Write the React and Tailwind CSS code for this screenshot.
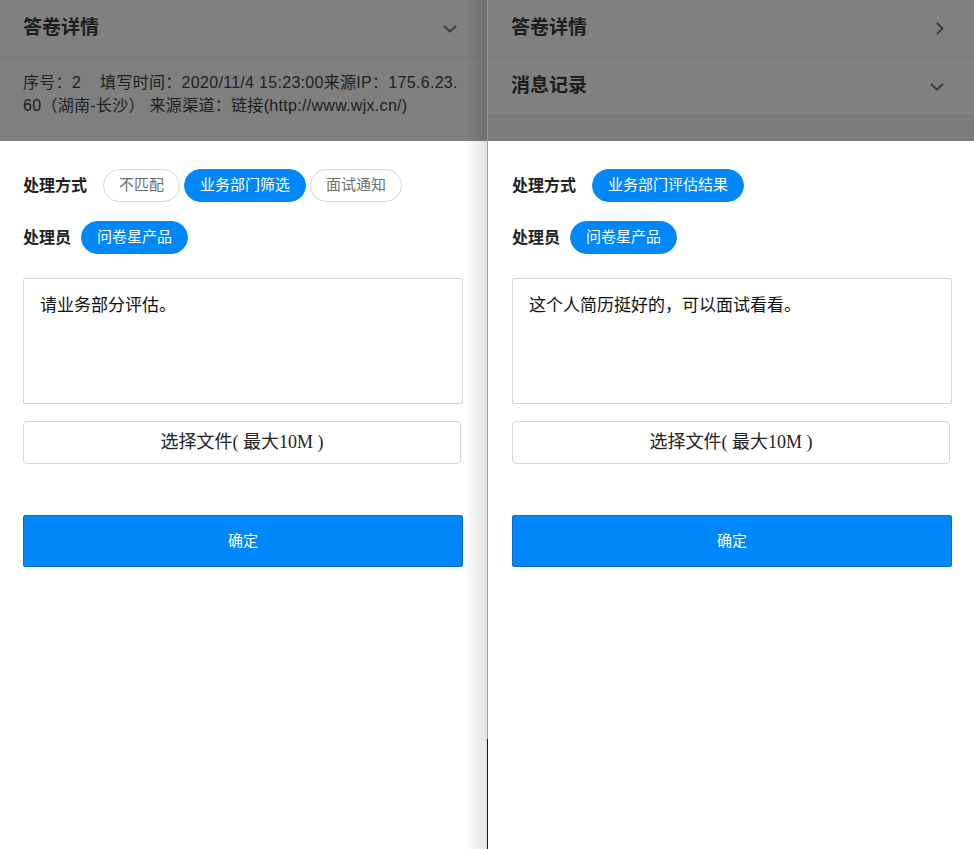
import React from "react";

const CJK = { fontFamily: '"Liberation Sans", "Noto Sans CJK SC", sans-serif' };
const SERIF = { fontFamily: '"Liberation Serif", "Noto Sans CJK SC", serif' };

function ChevronDown() {
  return (
    <svg width="14" height="8" viewBox="0 0 14 8" fill="none">
      <path d="M1.5 1.5 L7 6.5 L12.5 1.5" stroke="#3f3f3f" strokeWidth="2.2" strokeLinecap="round" strokeLinejoin="round" />
    </svg>
  );
}

function ChevronRight() {
  return (
    <svg width="8" height="13" viewBox="0 0 8 13" fill="none">
      <path d="M1.5 1.5 L6.5 6.5 L1.5 11.5" stroke="#3f3f3f" strokeWidth="2.2" strokeLinecap="round" strokeLinejoin="round" />
    </svg>
  );
}

function Header({ title, icon }) {
  return (
    <div className="h-[58px] shrink-0 flex items-center justify-between pl-[23px] pr-[30px] border-b border-[#777777] bg-[#808080]">
      <span className="text-[19px] font-bold text-[#1c1c1c]">{title}</span>
      {icon}
    </div>
  );
}

function Pill({ children, active }) {
  return active ? (
    <span className="h-[33px] px-[15px] flex items-center rounded-full bg-[#0088fb] border border-[#0088fb] text-white text-[15px]">
      {children}
    </span>
  ) : (
    <span className="h-[33px] px-[15px] flex items-center rounded-full bg-white border border-[#d6d6d6] text-[#6e6e6e] text-[15px]">
      {children}
    </span>
  );
}

function Form({ methods, text, padL }) {
  return (
    <div className={`flex flex-col pt-[28px] ${padL}`}>
      <div className="flex items-center">
        <span className="text-[16px] font-bold text-[#222] mr-[16px]">处理方式</span>
        <div className="flex items-center gap-[4px]">
          {methods.map((m) => (
            <Pill key={m.label} active={m.active}>{m.label}</Pill>
          ))}
        </div>
      </div>
      <div className="flex items-center mt-[19px]">
        <span className="text-[16px] font-bold text-[#222] mr-[10px]">处理员</span>
        <Pill active>问卷星产品</Pill>
      </div>
      <div className="mt-[24px] w-[440px] h-[126px] border border-[#d6d6d6] rounded-[2px] pl-[16px] pt-[15px] text-[17px] leading-[24px] text-[#111]">
        {text}
      </div>
      <div
        className="mt-[17px] w-[438px] h-[43px] border border-[#d6d6d6] rounded-[4px] flex items-center justify-center text-[18px] text-[#222]"
        style={SERIF}
      >
        选择文件( 最大10M )
      </div>
      <div className="mt-[51px] w-[440px] h-[52px] bg-[#0088fb] border border-[#0a6fc4] rounded-[2px] flex items-center justify-center text-white text-[15px]">
        确定
      </div>
    </div>
  );
}

export default function App() {
  return (
    <div className="w-[974px] h-[849px] flex bg-white overflow-hidden" style={CJK}>
      {/* Left panel */}
      <div className="relative w-[487px] h-full flex flex-col">
        <div className="h-[141px] bg-[#7f7f7f] flex flex-col">
          <Header title="答卷详情" icon={<ChevronDown />} />
          <div className="pl-[23px] pt-[13px] text-[16px] leading-[23px] text-[#202020] tracking-[0.3px]">
            <div className="whitespace-nowrap">
              序号：2<span className="ml-[19px]">填写时间：2020/11/4 15:23:00来源IP：175.6.23.</span>
            </div>
            <div className="whitespace-nowrap">60（湖南-长沙） 来源渠道：链接(http://www.wjx.cn/)</div>
          </div>
        </div>
        <Form
          padL="pl-[23px]"
          text="请业务部分评估。"
          methods={[
            { label: "不匹配", active: false },
            { label: "业务部门筛选", active: true },
            { label: "面试通知", active: false },
          ]}
        />
        <div className="absolute right-0 top-0 bottom-0 w-[22px] bg-gradient-to-r from-black/0 to-black/[0.11] pointer-events-none" />
      </div>

      {/* Divider */}
      <div className="w-px h-full flex flex-col">
        <div className="flex-1 bg-[#9a9a9a]" />
        <div className="h-[110px] bg-[#111]" />
      </div>

      {/* Right panel */}
      <div className="flex-1 h-full flex flex-col">
        <div className="h-[141px] bg-[#7b7b7b] flex flex-col">
          <Header title="答卷详情" icon={<ChevronRight />} />
          <Header title="消息记录" icon={<ChevronDown />} />
        </div>
        <Form
          padL="pl-[24px]"
          text="这个人简历挺好的，可以面试看看。"
          methods={[{ label: "业务部门评估结果", active: true }]}
        />
      </div>
    </div>
  );
}
